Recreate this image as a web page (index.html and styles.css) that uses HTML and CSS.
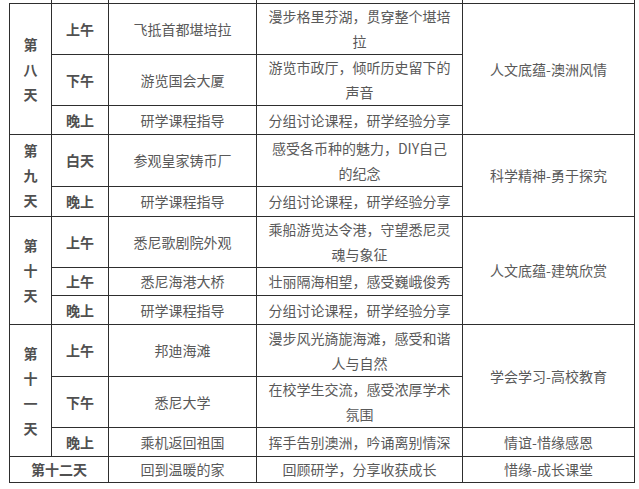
FILE: index.html
```html
<!DOCTYPE html>
<html lang="zh-CN">
<head>
<meta charset="utf-8">
<title>行程表</title>
<link rel="stylesheet" href="styles.css">
</head>
<body>
<table class="plan">
  <colgroup>
    <col class="c-day"><col class="c-time"><col class="c-place"><col class="c-desc"><col class="c-theme">
  </colgroup>
  <tr class="stub"><td class="nol"></td><td></td><td></td><td></td><td></td></tr>
  <tr class="r2">
    <td class="day" rowspan="3">第八天</td>
    <td class="time">上午</td>
    <td>飞抵首都堪培拉</td>
    <td class="desc">漫步格里芬湖，贯穿整个堪培拉</td>
    <td rowspan="3">人文底蕴-澳洲风情</td>
  </tr>
  <tr class="r2">
    <td class="time">下午</td>
    <td>游览国会大厦</td>
    <td class="desc">游览市政厅，倾听历史留下的声音</td>
  </tr>
  <tr class="r1">
    <td class="time">晚上</td>
    <td>研学课程指导</td>
    <td class="desc">分组讨论课程，研学经验分享</td>
  </tr>
  <tr class="r2b">
    <td class="day" rowspan="2">第九天</td>
    <td class="time">白天</td>
    <td>参观皇家铸币厂</td>
    <td class="desc">感受各币种的魅力，DIY自己的纪念</td>
    <td rowspan="2">科学精神-勇于探究</td>
  </tr>
  <tr class="r1b">
    <td class="time">晚上</td>
    <td>研学课程指导</td>
    <td class="desc">分组讨论课程，研学经验分享</td>
  </tr>
  <tr class="r2">
    <td class="day" rowspan="3">第十天</td>
    <td class="time">上午</td>
    <td>悉尼歌剧院外观</td>
    <td class="desc">乘船游览达令港，守望悉尼灵魂与象征</td>
    <td rowspan="3">人文底蕴-建筑欣赏</td>
  </tr>
  <tr class="r1s">
    <td class="time">上午</td>
    <td>悉尼海港大桥</td>
    <td class="desc">壮丽隔海相望，感受巍峨俊秀</td>
  </tr>
  <tr class="r1">
    <td class="time">晚上</td>
    <td>研学课程指导</td>
    <td class="desc">分组讨论课程，研学经验分享</td>
  </tr>
  <tr class="r2b">
    <td class="day" rowspan="3">第十一天</td>
    <td class="time">上午</td>
    <td>邦迪海滩</td>
    <td class="desc">漫步风光旖旎海滩，感受和谐人与自然</td>
    <td rowspan="2">学会学习-高校教育</td>
  </tr>
  <tr class="r2">
    <td class="time">下午</td>
    <td>悉尼大学</td>
    <td class="desc">在校学生交流，感受浓厚学术氛围</td>
  </tr>
  <tr class="r1">
    <td class="time">晚上</td>
    <td>乘机返回祖国</td>
    <td class="desc">挥手告别澳洲，吟诵离别情深</td>
    <td>情谊-惜缘感恩</td>
  </tr>
  <tr class="r0">
    <td class="time" colspan="2">第十二天</td>
    <td>回到温暖的家</td>
    <td class="desc">回顾研学，分享收获成长</td>
    <td>惜缘-成长课堂</td>
  </tr>
</table>
</body>
</html>
```

FILE: styles.css
```css
html, body {
  margin: 0;
  padding: 0;
  background: #ffffff;
}

body {
  padding-left: 9px;
  font-family: "Noto Sans CJK SC", "Microsoft YaHei", sans-serif;
  font-size: 14px;
  color: #595959;
}

.plan {
  border-collapse: collapse;
  table-layout: fixed;
  width: 625px;
}

.c-day { width: 42px; }
.c-time { width: 57px; }
.c-place { width: 148px; }
.c-desc { width: 206px; }
.c-theme { width: 172px; }

.plan td {
  border: 1px solid #2e2e2e;
  padding: 0 6px;
  text-align: center;
  vertical-align: middle;
  line-height: 25px;
}

.plan td.desc {
  padding: 0 10px;
}

.plan td.day {
  padding: 0 8px;
  font-weight: bold;
  color: #505050;
}

.plan td.time {
  font-weight: bold;
  color: #505050;
}

.stub td {
  height: 3px;
  border-top: none;
  line-height: 0;
  font-size: 0;
  padding: 0;
}

.stub td.nol {
  border-left: none;
}

.r2 { height: 51px; }
.r2b { height: 52px; }
.r1 { height: 29px; }
.r1b { height: 30px; }
.r1s { height: 28px; }
.r0 { height: 25px; }
```
